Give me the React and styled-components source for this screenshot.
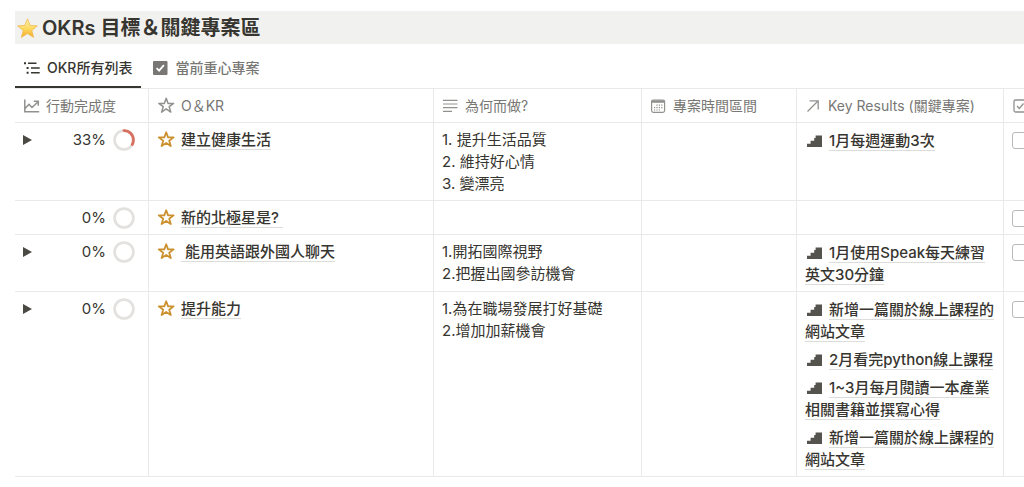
import { useState } from 'react';
import styled, { createGlobalStyle } from 'styled-components';

const GlobalStyle = createGlobalStyle`
  * {
    box-sizing: border-box;
  }
  body {
    margin: 0;
    background: #fff;
    color: #37352f;
    font-family: Inter, 'Noto Sans CJK TC', sans-serif;
    font-size: 15px;
    line-height: 22px;
  }
`;

const Page = styled.main`
  padding: 11px 0 10px 15px;
  overflow: hidden;
`;

const Title = styled.h1`
  display: flex;
  align-items: center;
  gap: 4px;
  margin: 0;
  padding: 1px 2px 0;
  height: 33px;
  background: #f1f1ef;
  font-size: 20px;
  line-height: 32px;
  font-weight: 600;
`;

const Tabs = styled.div`
  display: flex;
  align-items: stretch;
  gap: 2px;
  height: 44px;
`;

const Tab = styled.button`
  display: flex;
  align-items: center;
  gap: 6px;
  padding: 6px 9px 0;
  border: 0;
  border-bottom: 2px solid ${({ $active }) => ($active ? '#37352f' : 'transparent')};
  background: none;
  color: ${({ $active }) => ($active ? '#37352f' : '#787774')};
  font: inherit;
  font-size: 14px;
  font-weight: 500;
  cursor: pointer;
`;

const Scroller = styled.div`
  overflow-x: auto;
  scrollbar-width: none;
`;

const Table = styled.table`
  width: 1089px;
  min-width: 100%;
  table-layout: fixed;
  border-collapse: separate;
  border-spacing: 0;
  border-top: 1px solid #e9e9e7;
`;

const HeadCell = styled.th`
  height: 34px;
  padding: 0 8px;
  border-right: 1px solid #e9e9e7;
  border-bottom: 1px solid #e9e9e7;
  color: #787774;
  font-size: 14px;
  font-weight: 400;
  text-align: left;
  white-space: nowrap;
`;

const HeadLabel = styled.span`
  display: flex;
  align-items: center;
  gap: 6px;

  svg {
    color: #91918e;
  }
`;

const Cell = styled.td`
  padding: 6px 8px 5px;
  border-right: 1px solid #e9e9e7;
  border-bottom: 1px solid #e9e9e7;
  vertical-align: top;
`;

const RelationCell = styled(Cell)`
  padding-top: 7px;
`;

const Progress = styled.div`
  display: flex;
  align-items: center;
  justify-content: flex-end;
  gap: 7px;
  height: 22px;
  padding-right: 5px;
`;

const Toggle = styled.button`
  display: flex;
  margin-right: auto;
  padding: 0;
  border: 0;
  background: none;
  color: #4b4943;
  cursor: pointer;
`;

const Name = styled.div`
  svg {
    margin-right: 6px;
    vertical-align: -3px;
    color: #cb912f;
  }
`;

const PageLink = styled.a`
  border-bottom: 1px solid #dcdcda;
  color: inherit;
  font-weight: 500;
  text-decoration: none;
`;

const Notes = styled.div`
  white-space: pre-line;
`;

const Relations = styled.ul`
  display: flex;
  flex-direction: column;
  gap: 6px;
  margin: 0;
  padding: 0;
  list-style: none;

  svg {
    margin: 0 7px 0 2px;
    vertical-align: -1px;
    color: #55534e;
  }
`;

const Checkbox = styled.input`
  appearance: none;
  display: block;
  width: 17px;
  height: 17px;
  margin: 3px 0 0;
  border: 1px solid #b9b9b6;
  border-radius: 3px;
  background: #fff;

  &:checked {
    background: #2383e2;
  }
`;

const EmojiStar = () => (
  <svg width="21" height="21" viewBox="0 0 21 21" aria-hidden="true">
    <defs>
      <linearGradient id="gold" x1="0" y1="0" x2="0" y2="1">
        <stop offset="0" stopColor="#fff0b0" />
        <stop offset="0.5" stopColor="#fddc63" />
        <stop offset="1" stopColor="#f5aa2a" />
      </linearGradient>
    </defs>
    <path
      d="M10.5 .8 13.2 7.4l7.1.5-5.5 4.5 1.8 7-6.1-3.9-6.1 3.9 1.8-7L.7 7.9l7.1-.5z"
      fill="url(#gold)"
      stroke="#efb951"
      strokeWidth="0.8"
      strokeLinejoin="round"
    />
  </svg>
);

const StarIcon = ({ weight = 1.8 }) => (
  <svg width="18" height="17" viewBox="0 0 18 17" fill="none" aria-hidden="true">
    <path
      d="M9.2 1.3l1.9 5.1h5.5l-4.4 3.3 1.6 5.4-4.6-3.2-4.6 3.2 1.6-5.4-4.4-3.3h5.5z"
      stroke="currentColor"
      strokeWidth={weight}
      strokeLinejoin="round"
    />
  </svg>
);

const ListIcon = () => (
  <svg width="17" height="16" viewBox="0 0 17 16" fill="none" stroke="currentColor" aria-hidden="true">
    <path d="M4 3.2h8.5M7 8h8.7M7 12.8h8.7" strokeWidth="1.5" />
    <path d="M0 3.2h2M2.6 8h2M2.6 12.8h2" strokeWidth="2" />
  </svg>
);

const CheckSquareIcon = () => (
  <svg width="17" height="16" viewBox="0 0 17 16" aria-hidden="true">
    <rect x="1" y="1" width="14.5" height="14" rx="1" fill="currentColor" />
    <path d="M4.6 8.1l2.5 2.6 4.8-5.5" fill="none" stroke="#fff" strokeWidth="1.8" />
  </svg>
);

const ChartIcon = () => (
  <svg width="17" height="16" viewBox="0 0 17 16" fill="none" stroke="currentColor" strokeWidth="1.5" aria-hidden="true">
    <path d="M1.8 1.5v12.3h14.4M2 10.6l4-4.3 3 3.2L14.8 4M10.8 3.3h4.5v4.5" />
  </svg>
);

const LinesIcon = () => (
  <svg width="17" height="16" viewBox="0 0 17 16" fill="none" stroke="currentColor" strokeWidth="1.2" aria-hidden="true">
    <path d="M1 2.4h14.5M1 6h14.5M1 9.6h14.5M1 13.3h9" />
  </svg>
);

const CalendarIcon = () => (
  <svg width="17" height="16" viewBox="0 0 17 16" fill="none" aria-hidden="true">
    <rect x="1.6" y="2" width="13" height="12.4" rx="1.8" stroke="currentColor" strokeWidth="1.2" />
    <path d="M1.6 3.5h13" stroke="currentColor" strokeWidth="2.6" />
    <path
      d="M6.4 7.2h6M4 9.6h8.5M4 12h6"
      stroke="currentColor"
      strokeWidth="1.2"
      strokeDasharray="1.2 1.2"
    />
  </svg>
);

const ArrowIcon = () => (
  <svg width="17" height="16" viewBox="0 0 17 16" fill="none" stroke="currentColor" strokeWidth="1.3" aria-hidden="true">
    <path d="M2.5 13.5L13 3M4.6 2.8h8.6v8.6" />
  </svg>
);

const CheckOutlineIcon = () => (
  <svg width="16" height="16" viewBox="0 0 16 16" fill="none" stroke="currentColor" strokeWidth="1.3" aria-hidden="true">
    <rect x="2" y="2" width="12.5" height="12" rx="1.5" />
    <path d="M5 8l2.3 2.5 4.2-5" />
  </svg>
);

const TriangleIcon = () => (
  <svg width="9" height="10" viewBox="0 0 9 10" aria-hidden="true">
    <path d="M0 0l9 5-9 5z" fill="currentColor" />
  </svg>
);

const StairsIcon = () => (
  <svg width="15" height="12" viewBox="0 0 15 12" aria-hidden="true">
    <path d="M0 12V8.7h3.6V5.8h3.6V2.9h1.4V.5H15V12z" fill="currentColor" />
  </svg>
);

const Ring = ({ value }) => (
  <svg width="22" height="22" viewBox="0 0 22 22" fill="none" strokeWidth="2.8" aria-hidden="true">
    <circle cx="11" cy="11" r="9.4" stroke="#e3e2e0" />
    {value > 0 && (
      <circle
        cx="11"
        cy="11"
        r="9.4"
        stroke="#d9705f"
        pathLength="100"
        strokeDasharray={`${value} 100`}
        strokeLinecap="round"
        transform="rotate(-90 11 11)"
      />
    )}
  </svg>
);

const tabs = [
  { label: 'OKR所有列表', icon: <ListIcon /> },
  { label: '當前重心專案', icon: <CheckSquareIcon /> },
];

const columns = [
  { label: '行動完成度', icon: <ChartIcon />, width: 134 },
  { label: 'O＆KR', icon: <StarIcon weight={1.5} />, width: 285 },
  { label: '為何而做?', icon: <LinesIcon />, width: 208 },
  { label: '專案時間區間', icon: <CalendarIcon />, width: 155 },
  { label: 'Key Results (關鍵專案)', icon: <ArrowIcon />, width: 207 },
];

const rows = [
  {
    name: '建立健康生活',
    progress: 33,
    nested: true,
    notes: '1. 提升生活品質\n2. 維持好心情\n3. 變漂亮',
    results: ['1月每週運動3次'],
  },
  { name: '新的北極星是?\u00a0', progress: 0, nested: false, notes: '', results: [] },
  {
    name: '\u00a0能用英語跟外國人聊天',
    progress: 0,
    nested: true,
    notes: '1.開拓國際視野\n2.把握出國參訪機會',
    results: ['1月使用Speak每天練習英文30分鐘'],
  },
  {
    name: '提升能力',
    progress: 0,
    nested: true,
    notes: '1.為在職場發展打好基礎\n2.增加加薪機會',
    results: [
      '新增一篇關於線上課程的網站文章',
      '2月看完python線上課程',
      '1~3月每月閱讀一本產業相關書籍並撰寫心得',
      '新增一篇關於線上課程的網站文章',
    ],
  },
];

const Row = ({ row }) => (
  <tr>
    <Cell>
      <Progress>
        {row.nested && (
          <Toggle aria-label={row.name}>
            <TriangleIcon />
          </Toggle>
        )}
        {row.progress}%
        <Ring value={row.progress} />
      </Progress>
    </Cell>
    <Cell>
      <Name>
        <StarIcon />
        <PageLink href="#">{row.name}</PageLink>
      </Name>
    </Cell>
    <Cell>
      <Notes>{row.notes}</Notes>
    </Cell>
    <Cell />
    <RelationCell>
      <Relations>
        {row.results.map((result, i) => (
          <li key={i}>
            <StairsIcon />
            <PageLink href="#">{result}</PageLink>
          </li>
        ))}
      </Relations>
    </RelationCell>
    <Cell>
      <Checkbox type="checkbox" aria-label={row.name} />
    </Cell>
  </tr>
);

export default function App() {
  const [active, setActive] = useState(0);

  return (
    <Page>
      <GlobalStyle />
      <Title>
        <EmojiStar />
        OKRs 目標＆關鍵專案區
      </Title>
      <Tabs role="tablist">
        {tabs.map((tab, i) => (
          <Tab
            key={tab.label}
            role="tab"
            aria-selected={active === i}
            $active={active === i}
            onClick={() => setActive(i)}
          >
            {tab.icon}
            {tab.label}
          </Tab>
        ))}
      </Tabs>
      <Scroller>
        <Table>
          <colgroup>
            {columns.map((column) => (
              <col key={column.label} width={column.width} />
            ))}
            <col />
          </colgroup>
          <thead>
            <tr>
              {columns.map((column) => (
                <HeadCell key={column.label}>
                  <HeadLabel>
                    {column.icon}
                    {column.label}
                  </HeadLabel>
                </HeadCell>
              ))}
              <HeadCell aria-label="完成">
                <HeadLabel>
                  <CheckOutlineIcon />
                </HeadLabel>
              </HeadCell>
            </tr>
          </thead>
          <tbody>
            {rows.map((row) => (
              <Row key={row.name} row={row} />
            ))}
          </tbody>
        </Table>
      </Scroller>
    </Page>
  );
}
